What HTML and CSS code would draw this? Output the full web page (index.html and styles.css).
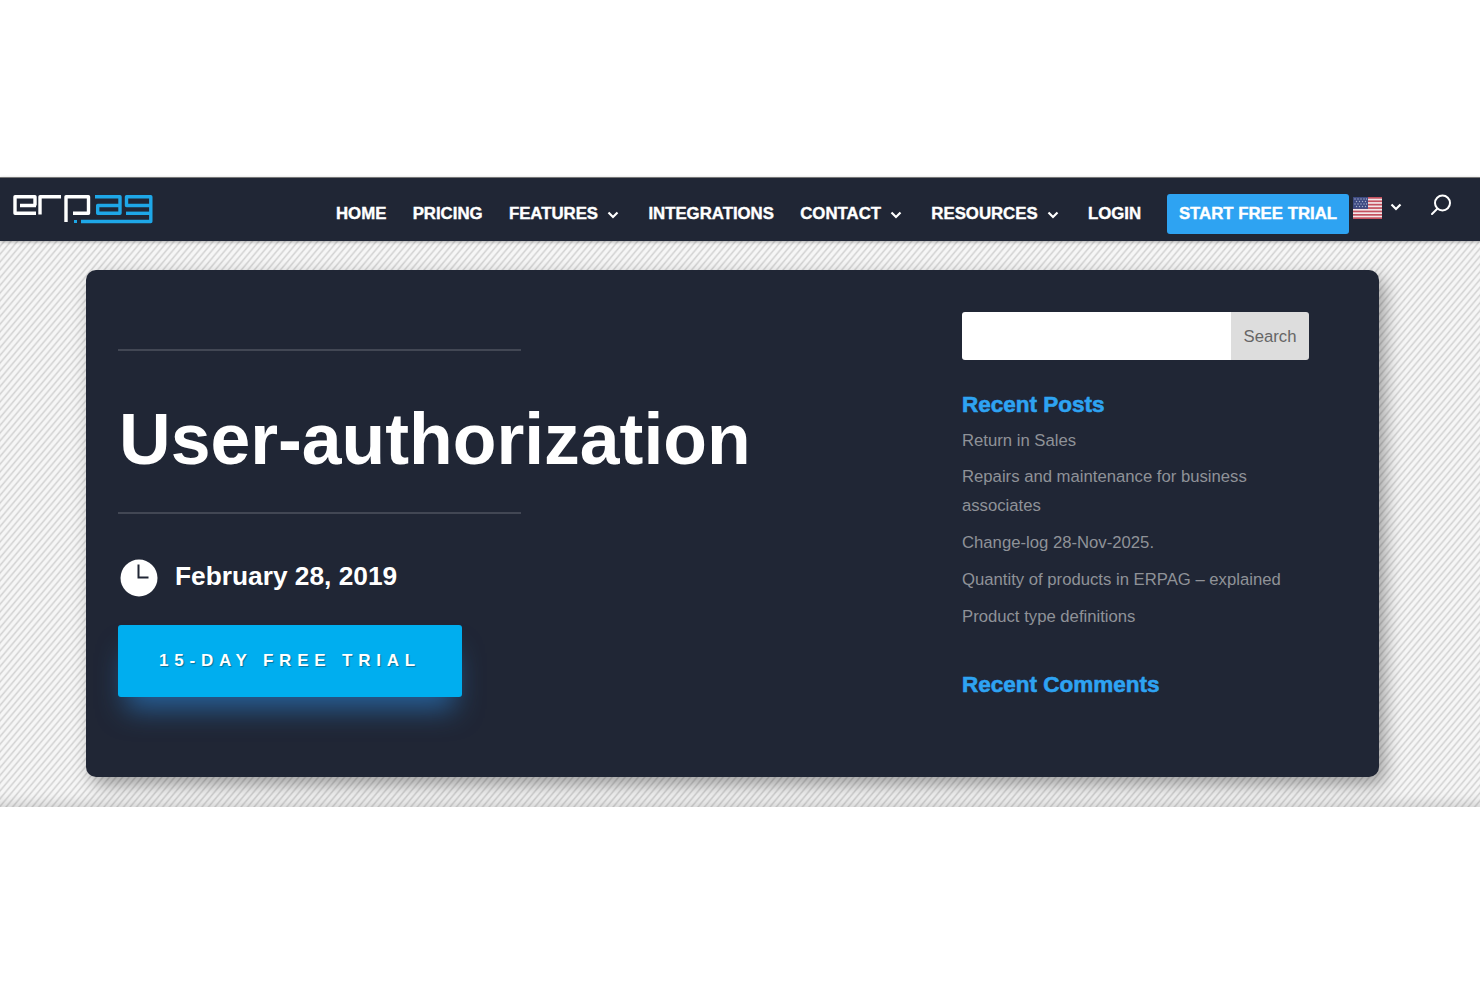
FILE: index.html
```html
<!DOCTYPE html>
<html lang="en">
<head>
    <meta charset="UTF-8">
    <meta name="viewport" content="width=device-width, initial-scale=1.0">
    <title>User-authorization</title>
    <link rel="stylesheet" href="styles.css">
</head>
<body>
    <header class="site-header">
        <a class="logo" href="#" aria-label="ERPAG">
            <svg width="150" height="40" viewBox="0 0 150 40" fill="none" stroke-width="3.4" stroke-linejoin="round">
                <g stroke="#fff">
                    <path d="M28 17.5H12M27 17.5V8.7H7V25.3H28"/>
                    <path d="M32 26.5V8.7H53"/>
                    <path d="M58 34V8.7H80.500V25.300H65"/>
                </g>
                <g stroke="#1ea7e8">
                    <path d="M87 8.700H112V25.300H89.700V17.500H111"/>
                    <path d="M144 17.500H118.500V8.700H142.800V33.500H73"/>
                    <path d="M118 25.300H143"/>
                </g>
                <rect x="66" y="32" width="3" height="3" fill="#1ea7e8"/>
            </svg>
        </a>
        <nav class="main-nav">
            <a href="#">HOME</a>
            <a href="#">PRICING</a>
            <a href="#" class="has-menu">FEATURES
                <svg class="chevron" viewBox="0 0 12 8"><path d="M1.500 1.500l4.500 4.500 4.500-4.500"/></svg>
            </a>
            <a href="#">INTEGRATIONS</a>
            <a href="#" class="has-menu">CONTACT
                <svg class="chevron" viewBox="0 0 12 8"><path d="M1.500 1.500l4.500 4.500 4.500-4.500"/></svg>
            </a>
            <a href="#" class="has-menu">RESOURCES
                <svg class="chevron" viewBox="0 0 12 8"><path d="M1.500 1.500l4.500 4.500 4.500-4.500"/></svg>
            </a>
            <a href="#">LOGIN</a>
            <a href="#" class="trial-link">START FREE TRIAL</a>
        </nav>
        <div class="lang-switch">
            <svg class="flag" width="29" height="22" viewBox="0 0 29 22">
                <rect width="29" height="22" fill="#f3e6e8"/>
                <g fill="#c4515f">
                    <rect y="0" width="29" height="1.700"/>
                    <rect y="3.400" width="29" height="1.700"/>
                    <rect y="6.800" width="29" height="1.700"/>
                    <rect y="10.200" width="29" height="1.700"/>
                    <rect y="13.600" width="29" height="1.700"/>
                    <rect y="17" width="29" height="1.700"/>
                    <rect y="20.300" width="29" height="1.700"/>
                </g>
                <rect width="15" height="11.900" fill="#3d4a82"/>
                <g fill="#aab0cc">
                    <circle cx="2" cy="2" r=".7"/><circle cx="5" cy="2" r=".7"/><circle cx="8" cy="2" r=".7"/><circle cx="11" cy="2" r=".7"/><circle cx="13.500" cy="2" r=".7"/>
                    <circle cx="3.500" cy="4.500" r=".7"/><circle cx="6.500" cy="4.500" r=".7"/><circle cx="9.500" cy="4.500" r=".7"/><circle cx="12.500" cy="4.500" r=".7"/>
                    <circle cx="2" cy="7" r=".7"/><circle cx="5" cy="7" r=".7"/><circle cx="8" cy="7" r=".7"/><circle cx="11" cy="7" r=".7"/><circle cx="13.500" cy="7" r=".7"/>
                    <circle cx="3.500" cy="9.500" r=".7"/><circle cx="6.500" cy="9.500" r=".7"/><circle cx="9.500" cy="9.500" r=".7"/><circle cx="12.500" cy="9.500" r=".7"/>
                </g>
            </svg>
            <svg class="chevron" viewBox="0 0 12 8"><path d="M1.500 1.500l4.500 4.500 4.500-4.500"/></svg>
        </div>
        <svg class="search-icon" width="22" height="23" viewBox="0 0 22 23" fill="none" stroke="#fff" stroke-width="2">
            <circle cx="12.500" cy="10" r="7.500"/>
            <path d="M7 16l-5 5" stroke-linecap="round"/>
        </svg>
    </header>

    <section class="hatch">
        <div class="card">
            <div class="post-head">
                <div class="title-wrap">
                    <h1>User-authorization</h1>
                </div>
                <div class="post-date">
                    <svg width="38" height="38" viewBox="0 0 38 38">
                        <circle cx="19" cy="19" r="18.500" fill="#fff"/>
                        <path d="M18.500 5.500V18.500H28.500" fill="none" stroke="#202635" stroke-width="2"/>
                    </svg>
                    <span>February 28, 2019</span>
                </div>
                <a href="#" class="cta">15-DAY FREE TRIAL</a>
            </div>
            <aside class="sidebar">
                <form class="search-form">
                    <input type="text" aria-label="Search">
                    <button type="button">Search</button>
                </form>
                <h4>Recent Posts</h4>
                <ul>
                    <li><a href="#">Return in Sales</a></li>
                    <li><a href="#">Repairs and maintenance for business associates</a></li>
                    <li><a href="#">Change-log 28-Nov-2025.</a></li>
                    <li><a href="#">Quantity of products in ERPAG – explained</a></li>
                    <li><a href="#">Product type definitions</a></li>
                </ul>
                <h4>Recent Comments</h4>
            </aside>
        </div>
    </section>
</body>
</html>
```

FILE: styles.css
```css
body {
    font-family: "Liberation Sans", Arial, sans-serif;
    margin: 0;
    padding: 177px 0 180px;
    background-color: #fff;
}

a {
    text-decoration: none;
    color: inherit;
}

.site-header {
    display: flex;
    align-items: flex-start;
    height: 63px;
    background: #202635;
    border-top: 1px solid #777;
    position: relative;
    z-index: 1;
    box-shadow: 0 1px 3px rgba(0, 0, 0, 0.3);
}

.logo {
    display: block;
    width: 150px;
    margin: 10px 0 0 8px;
}

.main-nav {
    display: flex;
    align-items: center;
    gap: 26.300px;
    height: 40px;
    margin: 16px 0 0 178px;
    color: #fff;
    font-size: 16.800px;
    font-weight: bold;
    -webkit-text-stroke: 0.4px currentColor;
}

.has-menu {
    display: flex;
    align-items: center;
}

.chevron {
    width: 12px;
    height: 8px;
    margin: 1px 3px 0 9px;
    fill: none;
    stroke: #fff;
    stroke-width: 2.200;
}

.trial-link {
    background: #2ea3f2;
    border-radius: 3px;
    padding: 0 11.500px;
    line-height: 40px;
}

.lang-switch {
    display: flex;
    align-items: center;
    margin: 19px 0 0 4px;
}

.lang-switch .chevron {
    margin: 0 0 3px 8px;
}

.search-icon {
    margin: 15px 0 0 28px;
}

.hatch {
    padding: 29px 0 30px 86px;
    background: repeating-linear-gradient(130deg, #f6f6f6 0, #f6f6f6 2px, #d2d2d2 3.500px, #f6f6f6 5px);
    box-shadow: inset 0 -14px 12px -10px rgba(0, 0, 0, 0.14);
}

.card {
    display: flex;
    width: 1293px;
    height: 507px;
    box-sizing: border-box;
    background: #202635;
    border-radius: 10px;
    box-shadow: 6px 8px 18px rgba(0, 0, 0, 0.35);
}

.post-head {
    width: 876px;
    box-sizing: border-box;
    padding: 79px 0 0 32px;
}

.title-wrap {
    display: flex;
    align-items: center;
    width: 403px;
    height: 161px;
    border-top: 2px solid #424754;
    border-bottom: 2px solid #424754;
}

h1 {
    margin: 16px 0 0 1px;
    color: #fff;
    font-size: 71.500px;
    line-height: 1;
    white-space: nowrap;
}

.post-date {
    display: flex;
    align-items: center;
    gap: 17px;
    margin: 45px 0 0 2px;
    color: #fff;
    font-size: 26.300px;
    font-weight: bold;
}

.post-date span {
    margin-top: -4px;
}

.cta {
    display: block;
    width: 344px;
    height: 72px;
    margin-top: 28px;
    background: #00aeef;
    border-radius: 3px;
    box-shadow: 0 20px 28px -8px rgba(43, 135, 218, 0.6);
    color: #fff;
    font-size: 17px;
    font-weight: bold;
    letter-spacing: 5.800px;
    line-height: 71px;
    text-align: center;
    text-shadow: 1px 1px 1px rgba(0, 0, 0, 0.35);
}

.sidebar {
    width: 347px;
    padding-top: 42px;
}

.search-form {
    display: flex;
    height: 48px;
    margin-bottom: 30px;
    border-radius: 3px;
    overflow: hidden;
}

.search-form input {
    flex: 1;
    min-width: 0;
    padding: 0;
    border: 0;
    background: #fff;
}

.search-form button {
    width: 78px;
    padding: 2px 0 0;
    border: 0;
    background: #ddd;
    color: #666;
    font-family: inherit;
    font-size: 16.700px;
}

h4 {
    margin: 0;
    color: #2ea3f2;
    font-size: 22.500px;
    line-height: 29px;
    -webkit-text-stroke: 0.6px currentColor;
}

ul {
    list-style: none;
    margin: 6.750px 0 39px;
    padding: 0;
    color: #8f9298;
    font-size: 16.700px;
    line-height: 29px;
}

li {
    margin-bottom: 7.700px;
}

li:last-child {
    margin-bottom: 0;
}
```
